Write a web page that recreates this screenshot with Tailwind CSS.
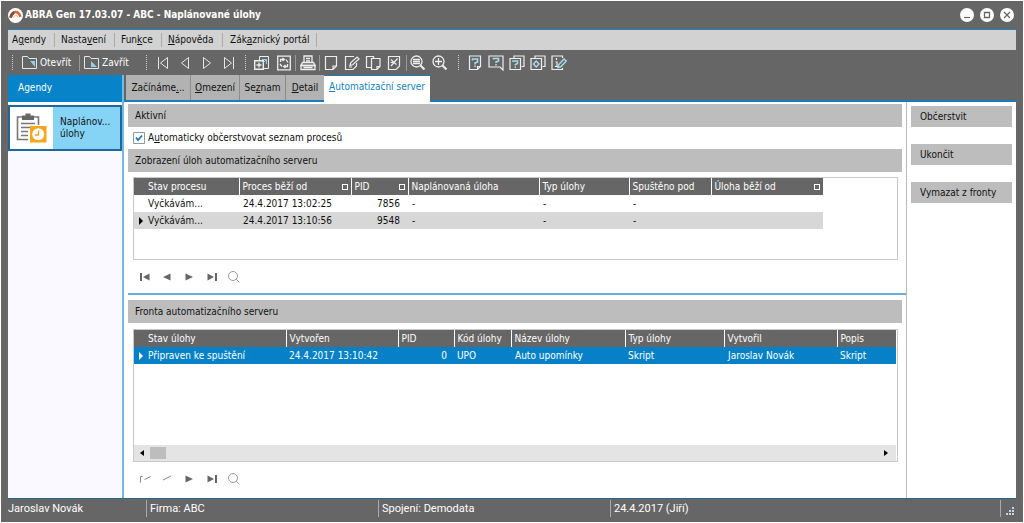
<!DOCTYPE html>
<html lang="cs">
<head>
<meta charset="utf-8">
<meta name="viewport" content="width=device-width, initial-scale=1">
<title>ABRA Gen 17.03.07 - ABC - Naplánované úlohy</title>
<script src="https://cdn.jsdelivr.net/npm/@tailwindcss/browser@4"></script>
</head>
<body class="bg-white font-['DejaVu_Sans_Condensed','DejaVu_Sans',sans-serif] text-[10px] leading-4 text-[#111]">
<div class="flex min-h-screen flex-col p-px">
<div class="flex flex-1 flex-col bg-[#666666] px-[7px]">

  <!-- Title bar -->
  <header class="flex h-7 shrink-0 items-center pr-[2px]">
    <svg class="mr-[2px] size-[15px]" viewBox="0 0 15 15"><circle cx="7.500" cy="7.500" r="7.500" fill="#fff"/><path d="M2.600 9.600C3.200 6 5.300 4 7.500 4c2.200 0 4.100 2 4.900 4.800" fill="none" stroke="#e2632b" stroke-width="2.600"/><path d="M2.600 9.600C3.200 7 4.600 5.200 6.200 4.300" fill="none" stroke="#7b4a45" stroke-width="2.600"/><path d="M5.800 9.500c.5-1.500 1-2.200 1.900-2.200s1.700.8 2.200 2" fill="none" stroke="#f7a765" stroke-width="1"/></svg>
    <h1 class="flex-1 text-[10px] font-bold text-white">ABRA Gen 17.03.07 - ABC - Naplánované úlohy</h1>
    <div class="flex gap-[6px]">
      <button aria-label="Minimalizovat"><svg class="size-[14px]" viewBox="0 0 14 14"><circle cx="7" cy="7" r="7" fill="#fff"/><path d="M4 9.500h6" stroke="#666" stroke-width="1.200"/></svg></button>
      <button aria-label="Maximalizovat"><svg class="size-[14px]" viewBox="0 0 14 14"><circle cx="7" cy="7" r="7" fill="#fff"/><path d="M4.500 4.500h5v5h-5z" fill="none" stroke="#666" stroke-width="1.300"/></svg></button>
      <button aria-label="Zavřít okno"><svg class="size-[14px]" viewBox="0 0 14 14"><circle cx="7" cy="7" r="7" fill="#fff"/><path d="M4 4l6 6M10 4l-6 6" stroke="#666" stroke-width="1.300"/></svg></button>
    </div>
  </header>

  <!-- Menu -->
  <nav class="flex h-[21px] shrink-0 items-center border-t border-[#1f7fc4] bg-[#d2d2d2] whitespace-nowrap">
    <button class="w-[47px] border-r border-[#aaa] pl-1 text-left leading-[14px]">A<u>g</u>endy</button>
    <button class="w-[60px] border-r border-[#aaa] pl-[6px] text-left leading-[14px]">Nasta<u>v</u>ení</button>
    <button class="w-[47px] border-r border-[#aaa] pl-[6px] text-left leading-[14px]">Fun<u>k</u>ce</button>
    <button class="w-[61px] border-r border-[#aaa] pl-[6px] text-left leading-[14px]"><u>N</u>ápověda</button>
    <button class="w-[94px] border-r border-[#aaa] pl-[7px] text-left leading-[14px]">Zák<u>a</u>znický portál</button>
  </nav>

  <!-- Toolbar -->
  <div class="flex h-[25px] shrink-0 items-center overflow-hidden text-white" role="toolbar">
    <span class="ml-1 h-[15px] border-l border-dotted border-[#ccc]"></span>
    <button class="ml-[9px] flex w-[57px] items-center gap-[2px]"><svg class="size-4 shrink-0" viewBox="0 0 16 16" fill="none" stroke="#e6e6e6"><path d="M.5 13.500v-12h5l1.500 2h7.500v10z"/><path d="M8 6h5v6z" fill="#8fd0ea" stroke="none"/></svg>Otevřít</button>
    <span class="h-4 border-l border-[#999]"></span>
    <button class="ml-[4px] flex w-[62px] items-center gap-[2px]"><svg class="size-4 shrink-0" viewBox="0 0 16 16" fill="none" stroke="#e6e6e6"><path d="M.5 13.500v-12h5l1.500 2h7.500v10z"/><path d="M7 6v6h6z" fill="#8fd0ea" stroke="none"/></svg>Zavřít</button>
    <span class="h-[15px] border-l border-dotted border-[#ccc]"></span>
    <div class="ml-[5px] flex w-[93px]">
      <button class="flex w-[22px] justify-center" aria-label="První"><svg class="size-4" viewBox="0 0 16 16" fill="none" stroke="#e6e6e6"><path d="M3.500 2v12M12.500 2.500v11L5.500 8z"/></svg></button>
      <button class="flex w-[22px] justify-center" aria-label="Předchozí"><svg class="size-4" viewBox="0 0 16 16" fill="none" stroke="#e6e6e6"><path d="M11.500 2.500v11L4.500 8z"/></svg></button>
      <button class="flex w-[22px] justify-center" aria-label="Další"><svg class="size-4" viewBox="0 0 16 16" fill="none" stroke="#e6e6e6"><path d="M4.500 2.500v11L11.500 8z"/></svg></button>
      <button class="flex w-[22px] justify-center" aria-label="Poslední"><svg class="size-4" viewBox="0 0 16 16" fill="none" stroke="#e6e6e6"><path d="M3.500 2.500v11L10.500 8zM12.500 2v12"/></svg></button>
    </div>
    <span class="h-[15px] border-l border-dotted border-[#ccc]"></span>
    <div class="ml-[5px] flex">
      <button class="flex w-[22px] justify-center" aria-label="Přidat"><svg class="size-4" viewBox="0 0 16 16" fill="none" stroke="#eee"><path d="M5.500 5V1.500h9v12H10"/><path d="M.7 5.700h8.600v8.600H.7z" stroke-width="1.400"/><path d="M2.500 10h5M5 7.500v5" stroke-width="1.300"/><path d="M8 4.500h4.500V9M12.500 4.500L9.500 7.500" stroke="#8fd0ea"/></svg></button>
      <button class="flex w-[22px] justify-center" aria-label="Obnovit"><svg class="size-4" viewBox="0 0 16 16" fill="none" stroke="#eee" stroke-width="1.300"><path d="M1.700 1.200h12.600v13.600H1.700z"/><path d="M4.500 7V4.500H8M6.500 3l1.800 1.500L6.500 6M11.500 9v2.500H8M9.500 10l-1.800 1.500L9.500 13M10 4.500l2 3M4 9l2 2.500"/></svg></button>
    </div>
    <span class="h-4 border-l border-[#999]"></span>
    <button class="flex w-[23px] justify-center" aria-label="Tisk"><svg class="size-4" viewBox="0 0 16 16" fill="none" stroke="#eee" stroke-width="1.300"><path d="M4 8V1h8v7M6 3.500h4M6 6h4"/><path d="M2.500 7.500h11l1.500 3H1z"/><path d="M1 10.500h14v4H1zM3.500 12.500h9"/></svg></button>
    <span class="h-4 border-l border-[#999]"></span>
    <div class="flex w-[86px]">
      <button class="flex w-[21px] justify-center" aria-label="Nový"><svg class="size-4" viewBox="0 0 16 16" fill="none" stroke="#eee" stroke-width="1.200"><path d="M2.500 1.500h11v9.500L10 14.500H2.500zM13.500 11H10v3.500"/></svg></button>
      <button class="flex w-[21px] justify-center" aria-label="Upravit"><svg class="size-4" viewBox="0 0 16 16" fill="none" stroke="#eee" stroke-width="1.200"><path d="M10 1.500H1.500v13H9L12.500 11V8"/><path d="M6 10.500l.7-2.700L13 2l2 2-6.300 5.800zM5 12h3"/></svg></button>
      <button class="flex w-[21px] justify-center" aria-label="Kopírovat"><svg class="size-4" viewBox="0 0 16 16" fill="none" stroke="#eee" stroke-width="1.200"><path d="M6 12.500H1.500v-11h7V3"/><path d="M6.500 3.500h8.500v8L12 14.500H6.500zM15 11.500h-3v3"/></svg></button>
      <button class="flex w-[21px] justify-center" aria-label="Smazat"><svg class="size-4" viewBox="0 0 16 16" fill="none" stroke="#eee" stroke-width="1.200"><path d="M2.500 1.500h11v9.500L10 14.500H2.500z"/><path d="M5 4.500l3 3 3.500-4M5 11l3-3.500 2.500 2M4.500 7.500H7"/></svg></button>
    </div>
    <span class="h-4 border-l border-[#999]"></span>
    <div class="flex w-[51px]">
      <button class="flex w-[22px] justify-center" aria-label="Hledat"><svg class="size-4" viewBox="0 0 16 16" fill="none" stroke="#eee" stroke-width="1.300"><circle cx="6.500" cy="6.500" r="5.500"/><path d="M3 4.500h7M3 6.500h7M3 8.500h7"/><path d="M10.500 10.500l4 4" stroke-width="2.200"/></svg></button>
      <button class="flex w-[22px] justify-center" aria-label="Přiblížit"><svg class="size-4" viewBox="0 0 16 16" fill="none" stroke="#eee" stroke-width="1.300"><circle cx="6.500" cy="6.500" r="5.500"/><path d="M3 6.500h7M6.500 3v7"/><path d="M10.500 10.500l4 4" stroke-width="2.200"/></svg></button>
    </div>
    <span class="h-[15px] border-l border-dotted border-[#ccc]"></span>
    <div class="ml-[5px] flex">
      <button class="flex w-[21px] justify-center" aria-label="Nápověda"><svg class="size-4" viewBox="0 0 16 16" fill="none" stroke="#eee" stroke-width="1.200"><path d="M2.500 1h11v10.500l-3 3h-8zM13.500 11.500h-3v3"/><path d="M5.500 5.500V4h5v3L8 8v1.500M8 10.500V12" stroke="#a5dcee" stroke-width="1.600"/></svg></button>
      <button class="flex w-[21px] justify-center" aria-label="Rada"><svg class="size-4" viewBox="0 0 16 16" fill="none" stroke="#eee" stroke-width="1.200"><path d="M15 15V1H1v11h11z"/><path d="M5.500 4.500V3.500h5V6L8 7v1M8 9v1.500" stroke="#a5dcee" stroke-width="1.600"/></svg></button>
      <button class="flex w-[21px] justify-center" aria-label="Témata nápovědy"><svg class="size-4" viewBox="0 0 16 16" fill="none" stroke="#eee" stroke-width="1.200"><path d="M5 3.500V1h10v10.500h-2.500"/><path d="M1 3.500h10.500v11H1z"/><path d="M4 7V6h4.500v2.500L6.300 9.500v1M6.300 11.500V13" stroke="#a5dcee" stroke-width="1.500"/></svg></button>
      <button class="flex w-[21px] justify-center" aria-label="Odkazy"><svg class="size-4" viewBox="0 0 16 16" fill="none" stroke="#eee" stroke-width="1.200"><path d="M5 3.500V1h10v10.500h-2.500"/><path d="M1 3.500h10.500v11H1z"/><path d="M6.200 6L9 9l-2.800 3-2.700-3z" stroke="#a5dcee" stroke-width="1.400"/></svg></button>
      <button class="flex w-[21px] justify-center" aria-label="Poznámka"><svg class="size-4" viewBox="0 0 16 16" fill="none" stroke="#eee" stroke-width="1.200"><path d="M11.500 3V1H1v13.500h10.500V13"/><path d="M5.500 3v2M4.500 7h1.500v4M4 11.500h3"/><path d="M7 12.500l.8-3L13 4l2.300 2-5.500 5.800z" stroke="#a5dcee" stroke-width="1.400"/></svg></button>
    </div>
  </div>

  <!-- Body -->
  <div class="flex flex-1 border-b border-[#1b6a99]">
    <aside class="w-[114px] shrink-0 bg-[#f9f9ff]">
      <h2 class="flex h-[27px] items-center bg-[#0683c9] px-[10px] pb-[2px] text-white">Agendy</h2>
      <button class="mt-[3px] flex h-[46px] w-full items-center border-2 border-[#1c679c] bg-[#86d4f5] text-left leading-3">
        <span class="flex h-full w-[43px] shrink-0 items-center justify-center bg-white">
          <svg class="h-[30px] w-[31px]" viewBox="0 0 31 30" fill="none"><path d="M6 4H1.500v22.500H12M18 4h4.500v8" stroke="#777" stroke-width="1.600"/><path d="M6 2.500h3.500V.5h5v2H18V7H6z" fill="#666"/><path d="M5 10.500h14M5 14.500h9M5 18.500h7M5 22.500h7" stroke="#777" stroke-width="1.600"/><path d="M14 13h16.500v16.500H14z" fill="#f9a51a"/><circle cx="22.200" cy="21.300" r="6" fill="#fff"/><path d="M22.500 17.500v4.500H19" stroke="#f9a51a" stroke-width="1.300"/></svg>
        </span>
        <span class="pl-[7px]">Naplánov...<br>úlohy</span>
      </button>
    </aside>
    <div class="w-[2px] shrink-0 bg-[#75b8e4]"></div>

    <main class="flex min-w-0 flex-1 flex-col">
      <div class="flex h-[27px] shrink-0 border-b-2 border-[#1c7abf] whitespace-nowrap" role="tablist">
        <div class="w-[2px]"></div>
        <button role="tab" class="w-[65px] border-r border-[#8c8c8c] bg-[#b2b2b2]">Začínáme<u>.</u>..</button>
        <button role="tab" class="w-[49px] border-r border-[#8c8c8c] bg-[#b2b2b2]"><u>O</u>mezení</button>
        <button role="tab" class="w-[46px] border-r border-[#8c8c8c] bg-[#b2b2b2]">Se<u>z</u>nam</button>
        <button role="tab" class="w-[38px] bg-[#b2b2b2]"><u>D</u>etail</button>
        <button role="tab" aria-selected="true" class="-mb-[2px] w-[106px] border-t border-[#1c7abf] bg-white pb-1 text-[#0f83cb]"><u>A</u>utomatizační server</button>
      </div>

      <div class="flex min-w-0 flex-1 bg-white">
        <div class="flex min-w-0 flex-1 flex-col pt-[2px] pr-1 pl-1">
          <h2 class="flex h-[23px] shrink-0 items-center bg-[#bdbdbd] px-[7px]">Aktivní</h2>
          <label class="ml-[5px] flex h-[22px] shrink-0 items-center gap-[3px]">
            <input type="checkbox" checked class="sr-only">
            <svg class="size-3 shrink-0" viewBox="0 0 12 12"><path d="M.5.500h11v11H.5z" fill="#fff" stroke="#8a9aa8"/><path d="M3 5.500l2 2.500 4-4.500" fill="none" stroke="#1577b5" stroke-width="1.800"/></svg>
            <span>A<u>u</u>tomaticky občerstvovat seznam procesů</span>
          </label>
          <h2 class="flex h-[23px] shrink-0 items-center bg-[#bdbdbd] px-[7px]">Zobrazení úloh automatizačního serveru</h2>

          <div class="mt-[5px] mr-1 ml-[5px] h-[83px] shrink-0 overflow-hidden border border-[#c9c9c9]">
            <table class="w-[689px] table-fixed text-left whitespace-nowrap">
              <colgroup><col class="w-[105px]"><col class="w-[112px]"><col class="w-[57px]"><col class="w-[131px]"><col class="w-[90px]"><col class="w-[82px]"><col class="w-[112px]"></colgroup>
              <thead class="bg-[#666666] text-white">
                <tr class="h-[17px]">
                  <th class="border-r border-white p-0 pl-[14px] font-normal">Stav procesu</th>
                  <th class="border-r border-white p-0 font-normal"><div class="flex items-center justify-between pr-[3px] pl-[3px]">Proces běží od<span class="size-[6px] border border-white"></span></div></th>
                  <th class="border-r border-white p-0 font-normal"><div class="flex items-center justify-between pr-[3px] pl-[3px]">PID<span class="size-[6px] border border-white"></span></div></th>
                  <th class="border-r border-white p-0 pl-[3px] font-normal">Naplánovaná úloha</th>
                  <th class="border-r border-white p-0 pl-[3px] font-normal">Typ úlohy</th>
                  <th class="border-r border-white p-0 pl-[3px] font-normal">Spuštěno pod</th>
                  <th class="p-0 font-normal"><div class="flex items-center justify-between pr-[3px] pl-[3px]">Úloha běží od<span class="size-[6px] border border-white"></span></div></th>
                </tr>
              </thead>
              <tbody>
                <tr class="h-[17px]"><td class="p-0 pl-[14px]">Vyčkávám...</td><td class="p-0 pl-1">24.4.2017 13:02:25</td><td class="p-0 pr-2 text-right">7856</td><td class="p-0 pl-1">-</td><td class="p-0 pl-1">-</td><td class="p-0 pl-1">-</td><td></td></tr>
                <tr class="h-[17px] bg-[#d7d7d7]"><td class="p-0"><div class="flex items-center gap-[5px] pl-[5px]"><svg class="h-2 w-1" viewBox="0 0 4 8"><path d="M0 0l4 4-4 4z"/></svg>Vyčkávám...</div></td><td class="p-0 pl-1">24.4.2017 13:10:56</td><td class="p-0 pr-2 text-right">9548</td><td class="p-0 pl-1">-</td><td class="p-0 pl-1">-</td><td class="p-0 pl-1">-</td><td></td></tr>
              </tbody>
            </table>
          </div>

          <div class="flex h-[33px] shrink-0 items-center pl-[6px]">
            <button class="flex w-[22px] justify-center" aria-label="První"><svg class="h-2 w-[10px]" viewBox="0 0 10 8" fill="#666"><path d="M0 0h2v8H0zM9.500.500v7L3 4z"/></svg></button>
            <button class="flex w-[22px] justify-center" aria-label="Předchozí"><svg class="h-2 w-[10px]" viewBox="0 0 10 8" fill="#666"><path d="M8.500.500v7L1 4z"/></svg></button>
            <button class="flex w-[22px] justify-center" aria-label="Další"><svg class="h-2 w-[10px]" viewBox="0 0 10 8" fill="#666"><path d="M1.500.500v7L9 4z"/></svg></button>
            <button class="flex w-[23px] justify-center" aria-label="Poslední"><svg class="h-2 w-[10px]" viewBox="0 0 10 8" fill="#666"><path d="M8 0h2v8H8zM.5.500v7L7 4z"/></svg></button>
            <button class="flex w-[22px] justify-center" aria-label="Hledat"><svg class="size-3" viewBox="0 0 12 12" fill="none" stroke="#999"><circle cx="5" cy="5" r="4.500"/><path d="M8.200 8.200l3.300 3.300"/></svg></button>
          </div>
          <div class="-mr-1 h-[2px] shrink-0 bg-[#62b2d6]"></div>

          <h2 class="mt-[5px] flex h-[23px] shrink-0 items-center bg-[#bdbdbd] px-[7px]">Fronta automatizačního serveru</h2>
          <div class="mt-[6px] mr-1 ml-[5px] flex min-h-[132px] flex-1 flex-col overflow-hidden border border-[#c9c9c9] pr-px">
            <table class="w-full table-fixed text-left whitespace-nowrap">
              <colgroup><col class="w-[152px]"><col class="w-[112px]"><col class="w-[56px]"><col class="w-[57px]"><col class="w-[114px]"><col class="w-[99px]"><col class="w-[113px]"><col></colgroup>
              <thead class="bg-[#666666] text-white">
                <tr class="h-[17px]">
                  <th class="border-r border-white p-0 pl-[14px] font-normal">Stav úlohy</th>
                  <th class="border-r border-white p-0 pl-[3px] font-normal">Vytvořen</th>
                  <th class="border-r border-white p-0 pl-[3px] font-normal">PID</th>
                  <th class="border-r border-white p-0 pl-[3px] font-normal">Kód úlohy</th>
                  <th class="border-r border-white p-0 pl-[3px] font-normal">Název úlohy</th>
                  <th class="border-r border-white p-0 pl-[3px] font-normal">Typ úlohy</th>
                  <th class="border-r border-white p-0 pl-[3px] font-normal">Vytvořil</th>
                  <th class="p-0 pl-[3px] font-normal">Popis</th>
                </tr>
              </thead>
              <tbody>
                <tr class="h-[17px] bg-[#0681c8] text-white"><td class="p-0"><div class="flex items-center gap-[5px] pl-[5px]"><svg class="h-2 w-1" viewBox="0 0 4 8" fill="#fff"><path d="M0 0l4 4-4 4z"/></svg>Připraven ke spuštění</div></td><td class="p-0 pl-[3px]">24.4.2017 13:10:42</td><td class="p-0 pr-[7px] text-right">0</td><td class="p-0 pl-[3px]">UPO</td><td class="p-0 pl-1">Auto upomínky</td><td class="p-0 pl-[3px]">Skript</td><td class="p-0 pl-1">Jaroslav Novák</td><td class="p-0 pl-[3px]">Skript</td></tr>
              </tbody>
            </table>
            <div class="mt-auto flex h-4 items-center bg-[#e4e4e4] pr-2 pl-[6px]">
              <button aria-label="Posunout vlevo"><svg class="h-[6px] w-1" viewBox="0 0 4 6"><path d="M4 0L0 3l4 3z"/></svg></button>
              <span class="ml-[6px] h-3 w-4 bg-[#bdbdbd]"></span>
              <button class="ml-auto" aria-label="Posunout vpravo"><svg class="h-[6px] w-1" viewBox="0 0 4 6"><path d="M0 0l4 3-4 3z"/></svg></button>
            </div>
          </div>

          <div class="flex h-9 shrink-0 items-center pb-[3px] pl-[6px]">
            <button class="flex w-[22px] justify-center" aria-label="První"><svg class="h-2 w-[12px]" viewBox="0 0 12 8" fill="none" stroke="#888"><path d="M3.500 1.500h-2v6M5.500 4.500l6-3"/></svg></button>
            <button class="flex w-[22px] justify-center" aria-label="Předchozí"><svg class="h-2 w-[10px]" viewBox="0 0 10 8" fill="none" stroke="#888"><path d="M1 5l8-4"/></svg></button>
            <button class="flex w-[22px] justify-center" aria-label="Další"><svg class="h-2 w-[10px]" viewBox="0 0 10 8" fill="#666"><path d="M1.500.500v7L9 4z"/></svg></button>
            <button class="flex w-[23px] justify-center" aria-label="Poslední"><svg class="h-2 w-[10px]" viewBox="0 0 10 8" fill="#666"><path d="M8 0h2v8H8zM.5.500v7L7 4z"/></svg></button>
            <button class="flex w-[22px] justify-center" aria-label="Hledat"><svg class="size-3" viewBox="0 0 12 12" fill="none" stroke="#999"><circle cx="5" cy="5" r="4.500"/><path d="M8.200 8.200l3.300 3.300"/></svg></button>
          </div>
        </div>

        <div class="flex w-[110px] shrink-0 flex-col gap-[17px] border-l border-[#bbb] pt-1 pr-1 pl-1">
          <button class="h-[21px] bg-[#bdbdbd] pl-[9px] text-left">Občerstvit</button>
          <button class="h-[21px] bg-[#bdbdbd] pl-[9px] text-left">Ukončit</button>
          <button class="h-[21px] bg-[#bdbdbd] pl-[9px] text-left">Vymazat z fronty</button>
        </div>
      </div>
    </main>
  </div>

  <!-- Status bar -->
  <footer class="flex h-[23px] shrink-0 items-start pt-px font-['Roboto',sans-serif] text-[11px] leading-[17px] text-white">
    <span class="w-[138px]">Jaroslav Novák</span>
    <span class="w-[232px] border-l border-[#aaa] pl-[3px]">Firma: ABC</span>
    <span class="w-[232px] border-l border-[#aaa] pl-[3px]">Spojení: Demodata</span>
    <span class="flex-1 border-l border-[#aaa] pl-[3px]">24.4.2017 (Jiří)</span>
    <span class="flex h-[17px] w-4 items-end justify-end border-l border-[#aaa] pb-[2px]"><svg class="mr-[2px] size-2" viewBox="0 0 8 8" fill="#c8d4ee"><path d="M6 0h2v2H6zM6 3h2v2H6zM3 3h2v2H3zM6 6h2v2H6zM3 6h2v2H3zM0 6h2v2H0z"/></svg></span>
  </footer>
</div>
</div>
</body>
</html>
